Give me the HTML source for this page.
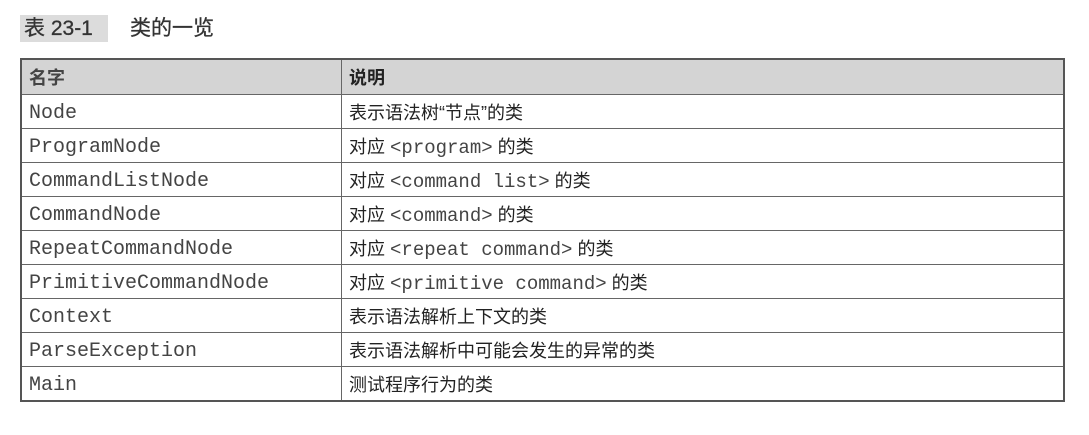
<!DOCTYPE html>
<html><head><meta charset="utf-8"><style>
body{margin:0;width:1089px;height:435px;background:#fff;position:relative;font-family:"Liberation Sans","Noto Sans CJK SC",sans-serif;color:#222;overflow:hidden}
.tt{position:absolute;left:20px;top:15px;width:88px;height:27px;background:#dcdcdc}
.t1{position:absolute;left:24px;top:15px;font-size:21px;line-height:27px;color:#333;-webkit-text-stroke:0.3px #333}
.t2{position:absolute;left:130px;top:15px;font-size:21px;line-height:27px;color:#333;-webkit-text-stroke:0.3px #333}
table{position:absolute;left:20px;top:58px;width:1045px;border-collapse:collapse;border:2px solid #555}
td{border:1px solid #666;height:33px;padding:0 0 0 7px;font-size:18px;vertical-align:middle}
td.c1{width:312px;font-family:"Liberation Mono",monospace;font-size:20px;color:#444;padding-top:4px;height:29px}
tr.h td{background:#d4d4d4;font-weight:bold;font-family:"Liberation Sans","Noto Sans CJK SC",sans-serif;font-size:18px;height:34px;padding-top:0}
.m{font-family:"Liberation Mono",monospace;font-size:19px;color:#444}
</style></head><body>
<div class="tt"></div><div class="t1">表 23-1</div><div class="t2">类的一览</div>
<table>
<tr class="h"><td class="c1">名字</td><td>说明</td></tr>
<tr><td class="c1">Node</td><td>表示语法树“节点”的类</td></tr>
<tr><td class="c1">ProgramNode</td><td>对应 <span class="m">&lt;program&gt;</span> 的类</td></tr>
<tr><td class="c1">CommandListNode</td><td>对应 <span class="m">&lt;command list&gt;</span> 的类</td></tr>
<tr><td class="c1">CommandNode</td><td>对应 <span class="m">&lt;command&gt;</span> 的类</td></tr>
<tr><td class="c1">RepeatCommandNode</td><td>对应 <span class="m">&lt;repeat command&gt;</span> 的类</td></tr>
<tr><td class="c1">PrimitiveCommandNode</td><td>对应 <span class="m">&lt;primitive command&gt;</span> 的类</td></tr>
<tr><td class="c1">Context</td><td>表示语法解析上下文的类</td></tr>
<tr><td class="c1">ParseException</td><td>表示语法解析中可能会发生的异常的类</td></tr>
<tr><td class="c1">Main</td><td>测试程序行为的类</td></tr>
</table>
</body></html>
